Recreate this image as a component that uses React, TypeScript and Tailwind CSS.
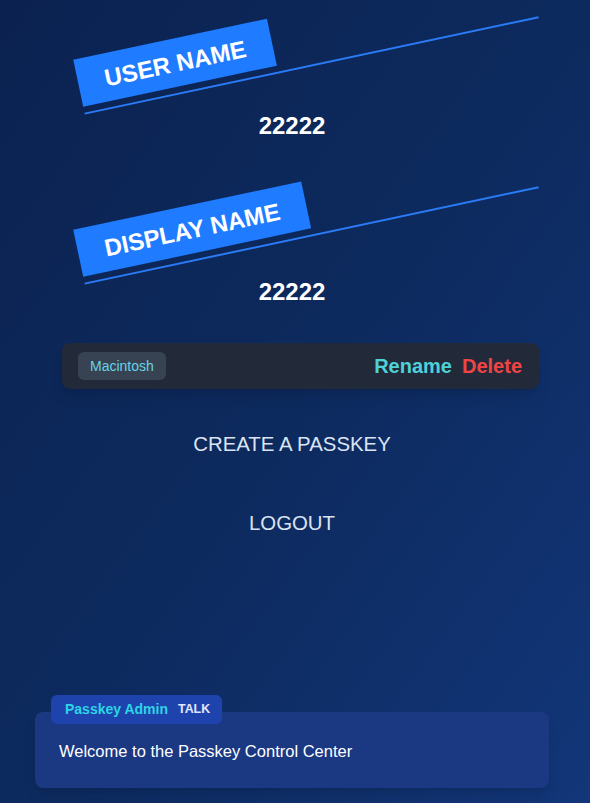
import React from "react";

export default function App() {
  return (
    <div
      className="h-screen w-full flex flex-col bg-gradient-to-br from-[#0b2250] via-[#0d2a5e] to-[#123679] overflow-hidden"
      style={{ fontFamily: '"Liberation Sans", Arial, sans-serif' }}
    >
      <div className="pt-[11px]">
        <div className="pl-[74px]">
          <div className="w-[464px] h-[56px] -rotate-12 border-b-2 border-[#2a7bf5] flex items-start">
            <div className="h-[48px] px-[27px] pt-[2px] bg-[#1f7bff] flex items-center text-white font-bold text-[24px] leading-none whitespace-nowrap">
              USER NAME
            </div>
          </div>
        </div>
        <div className="mt-[43px] pr-[6px] h-8 leading-8 text-center text-white font-bold text-[24px]">22222</div>
      </div>

      <div className="mt-[39px]">
        <div className="pl-[74px]">
          <div className="w-[464px] h-[56px] -rotate-12 border-b-2 border-[#2a7bf5] flex items-start">
            <div className="h-[48px] px-[27px] pt-[2px] bg-[#1f7bff] flex items-center text-white font-bold text-[24px] leading-none whitespace-nowrap">
              DISPLAY NAME
            </div>
          </div>
        </div>
        <div className="mt-[39px] pr-[6px] h-8 leading-8 text-center text-white font-bold text-[24px]">22222</div>
      </div>

      <div className="mt-[35px] ml-[62px] w-[477px] h-[46px] rounded-lg bg-[#222a3a] shadow-lg flex items-center justify-between pl-4 pr-[17px]">
        <div className="h-[28px] px-3 rounded-md bg-[#374253] flex items-center text-[14px] text-[#67d4e3]">
          Macintosh
        </div>
        <div className="flex items-center gap-[10px] text-[20px] font-bold leading-none">
          <span className="text-[#4fd1d9]">Rename</span>
          <span className="text-[#ef4444]">Delete</span>
        </div>
      </div>

      <div className="mt-[41px] pr-[6px] h-7 leading-7 text-center text-[20.4px] text-[#dbe4f3]">CREATE A PASSKEY</div>
      <div className="mt-[51px] pr-[6px] h-7 leading-7 text-center text-[20.4px] text-[#dbe4f3]">LOGOUT</div>

      <div className="mt-auto mb-[15px] ml-[35px] w-[514px] relative">
        <div className="absolute -top-[17px] left-4 h-[29px] pl-[14px] pr-3 rounded-md bg-[#1e43ad] flex items-center gap-[10px] font-bold">
          <span className="text-[14px] text-[#2dd4e6]">Passkey Admin</span>
          <span className="text-[12.4px] text-[#e0e7ff]">TALK</span>
        </div>
        <div className="h-[76px] rounded-lg bg-[#1b3883] shadow-lg flex items-center px-6 pt-[3px]">
          <span className="text-[16.5px] text-white">Welcome to the Passkey Control Center</span>
        </div>
      </div>
    </div>
  );
}
